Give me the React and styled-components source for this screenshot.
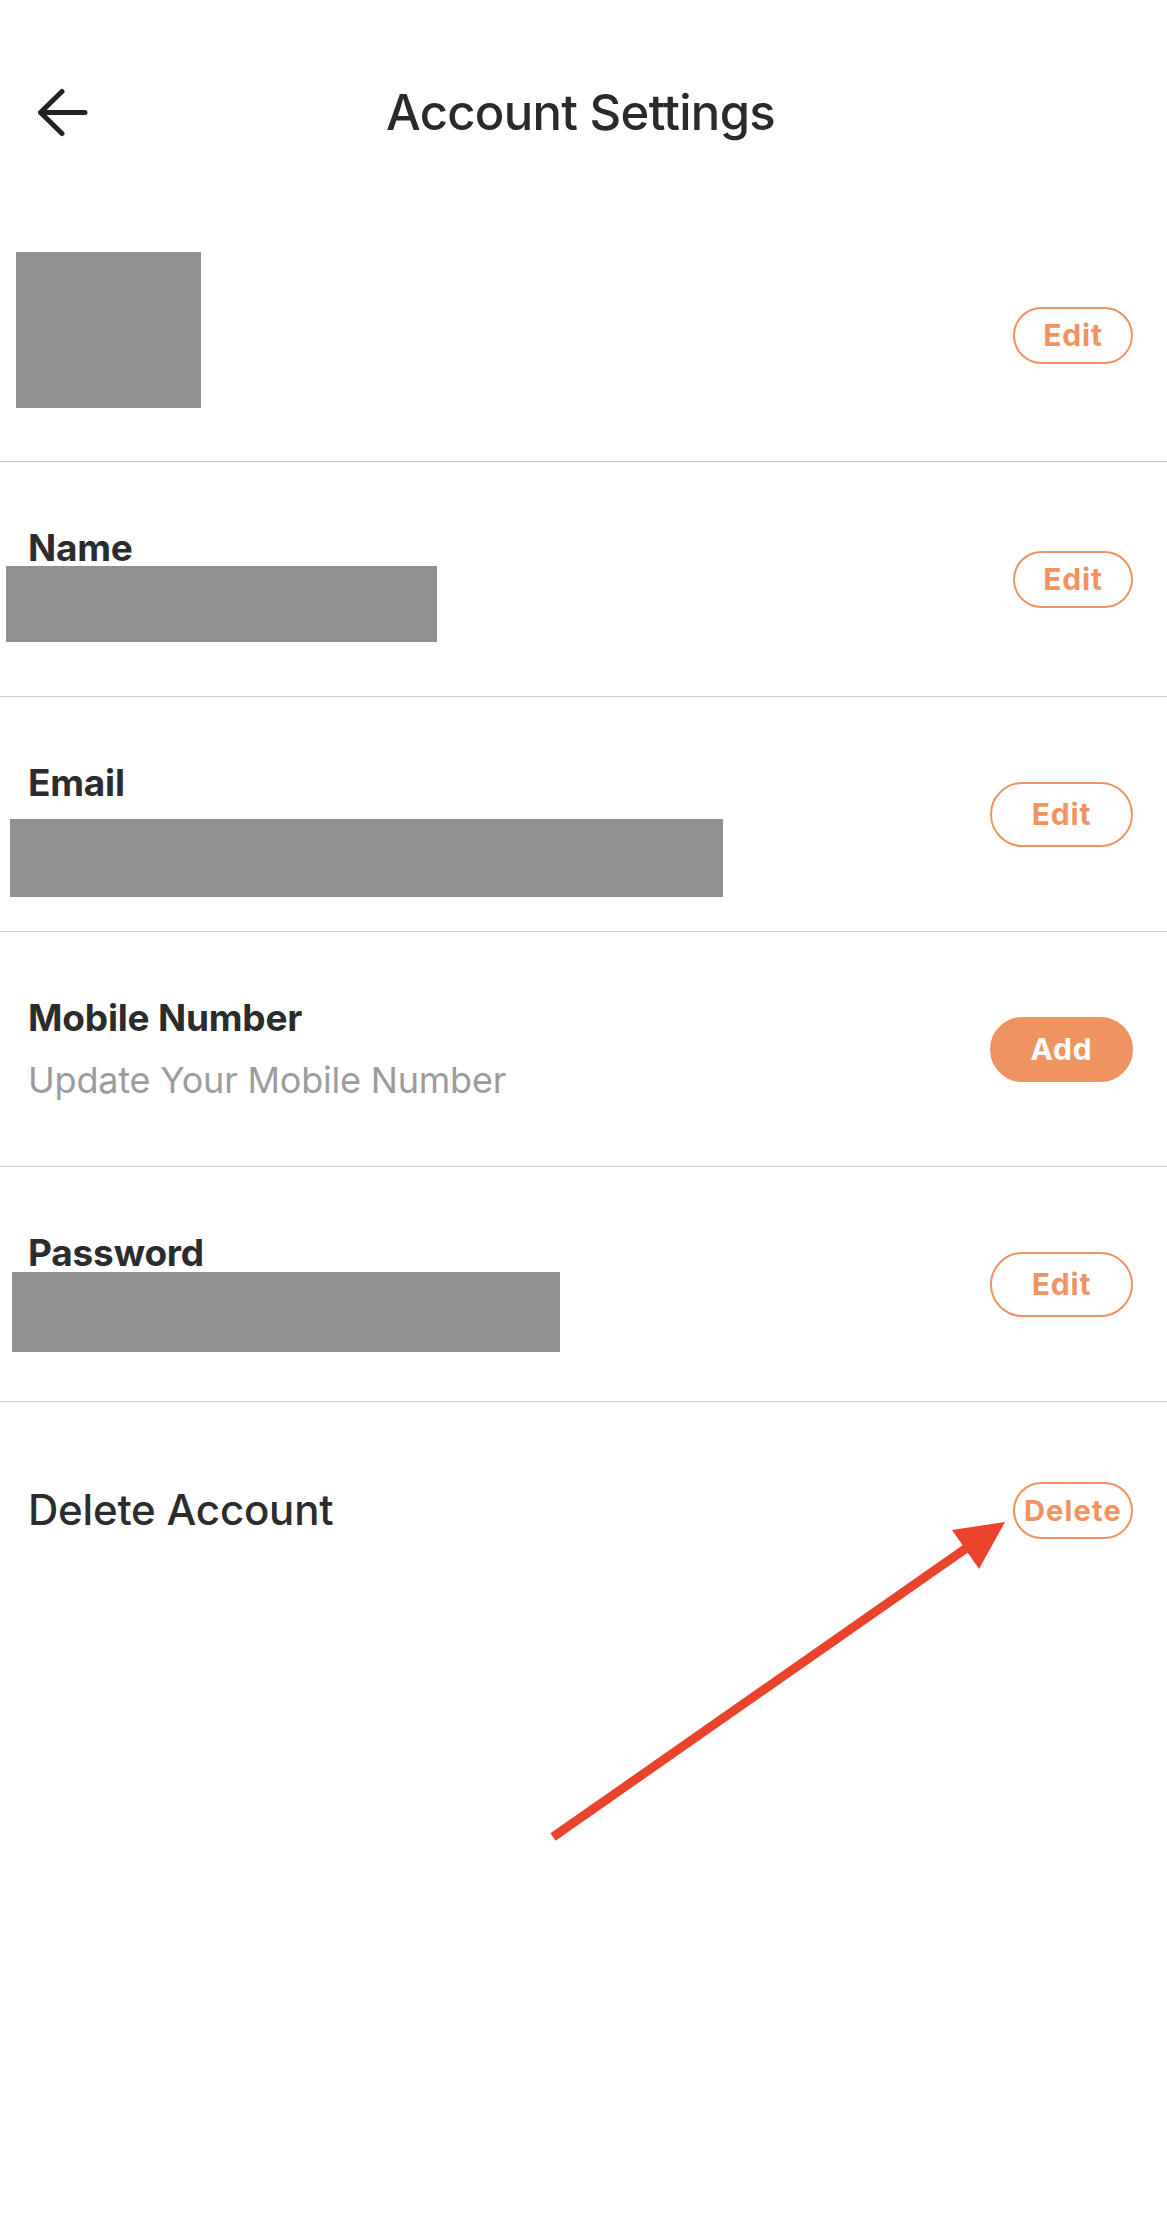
import React from "react";
import styled, { createGlobalStyle } from "styled-components";

const Global = createGlobalStyle`
  html, body { margin: 0; padding: 0; background: #ffffff; }
  body { font-family: Inter, "Noto Sans", "Liberation Sans", sans-serif; color: #2b2b2b; }
  * { box-sizing: border-box; }
`;

const Page = styled.div`
  position: relative;
  width: 1167px;
  min-height: 2216px;
  background: #ffffff;
`;

const Header = styled.header`
  height: 209px;
  padding-top: 83px;
  display: grid;
  grid-template-columns: 1fr auto 1fr;
  align-items: start;
`;

const BackButton = styled.button`
  justify-self: start;
  margin-left: 37px;
  width: 52px;
  height: 60px;
  padding: 0;
  border: 0;
  background: transparent;
  display: flex;
  align-items: center;
  justify-content: center;
  cursor: pointer;
`;

const Title = styled.h1`
  margin: 0 6px 0 0;
  font-size: 49px;
  line-height: 60px;
  font-weight: 500;
  color: #2a2a2a;
  letter-spacing: -0.7px;
`;

const Row = styled.section`
  display: flex;
  align-items: center;
  justify-content: space-between;
  min-height: ${(p) => p.$height}px;
  padding-right: 34px;
  border-bottom: ${(p) => (p.$last ? "0" : "1px solid #cacaca")};
`;

const Info = styled.div`
  align-self: stretch;
  display: flex;
  flex-direction: column;
  align-items: flex-start;
  padding-top: 68px;
`;

const Label = styled.div`
  margin-left: 28px;
  font-size: 37px;
  line-height: 36px;
  font-weight: 700;
  color: #2c2c2c;
  letter-spacing: -0.2px;
`;

const Hint = styled.div`
  margin-left: 28px;
  margin-top: 26px;
  font-size: 36px;
  line-height: 36px;
  font-weight: 400;
  color: #9c9c9c;
  letter-spacing: -0.2px;
`;

const Redacted = styled.div`
  margin-left: ${(p) => p.$left}px;
  margin-top: ${(p) => p.$top}px;
  width: ${(p) => p.$w}px;
  height: ${(p) => p.$h}px;
  background: #909090;
`;

const Avatar = styled.div`
  align-self: flex-start;
  margin-top: 43px;
  margin-left: 16px;
  width: 185px;
  height: 156px;
  background: #909090;
`;

const DangerLabel = styled.div`
  margin-left: 28px;
  font-size: 42px;
  line-height: 50px;
  font-weight: 500;
  color: #2c2c2c;
  letter-spacing: -0.2px;
`;

const Pill = styled.button`
  flex: none;
  width: ${(p) => (p.$size === "lg" ? 143 : 120)}px;
  height: ${(p) => (p.$size === "lg" ? 65 : 57)}px;
  padding: 0;
  border: 2.6px solid #ef9461;
  border-radius: 999px;
  background: ${(p) => (p.$filled ? "#ee9461" : "#ffffff")};
  color: ${(p) => (p.$filled ? "#ffffff" : "#ef9461")};
  font-family: Inter, "Noto Sans", sans-serif;
  font-size: ${(p) => p.$font || 30}px;
  font-weight: 700;
  letter-spacing: ${(p) => p.$spacing ?? 0.8}px;
  display: flex;
  align-items: center;
  justify-content: center;
  cursor: pointer;
`;

const Annotation = styled.svg`
  position: absolute;
  left: 0;
  top: 0;
  pointer-events: none;
`;

function BackArrow() {
  return (
    <svg width="50" height="50" viewBox="0 0 50 50" fill="none">
      <path
        d="M24 3.5 L2.5 24.5 L24 45.5 M2.5 24.5 H47"
        stroke="#222222"
        strokeWidth="5"
        strokeLinecap="round"
        strokeLinejoin="round"
      />
    </svg>
  );
}

export default function App() {
  return (
    <Page>
      <Global />
      <Header>
        <BackButton aria-label="Back">
          <BackArrow />
        </BackButton>
        <Title>Account Settings</Title>
        <span />
      </Header>

      <Row $height={253}>
        <Avatar />
        <Pill>Edit</Pill>
      </Row>

      <Row $height={235}>
        <Info>
          <Label>Name</Label>
          <Redacted $left={6} $top={0} $w={431} $h={76} />
        </Info>
        <Pill>Edit</Pill>
      </Row>

      <Row $height={235}>
        <Info>
          <Label>Email</Label>
          <Redacted $left={10} $top={18} $w={713} $h={78} />
        </Info>
        <Pill $size="lg">Edit</Pill>
      </Row>

      <Row $height={235}>
        <Info>
          <Label>Mobile Number</Label>
          <Hint>Update Your Mobile Number</Hint>
        </Info>
        <Pill $size="lg" $filled>Add</Pill>
      </Row>

      <Row $height={235}>
        <Info>
          <Label>Password</Label>
          <Redacted $left={12} $top={1} $w={548} $h={80} />
        </Info>
        <Pill $size="lg">Edit</Pill>
      </Row>

      <Row $height={216} $last>
        <DangerLabel>Delete Account</DangerLabel>
        <Pill $font={29} $spacing={1.2}>Delete</Pill>
      </Row>

      <Annotation width="1167" height="2216" viewBox="0 0 1167 2216">
        <line
          x1="553"
          y1="1837"
          x2="968"
          y2="1547"
          stroke="#e9432b"
          strokeWidth="9"
          strokeLinecap="butt"
        />
        <polygon points="1005,1522 952,1530 979,1569" fill="#e9432b" />
      </Annotation>
    </Page>
  );
}
